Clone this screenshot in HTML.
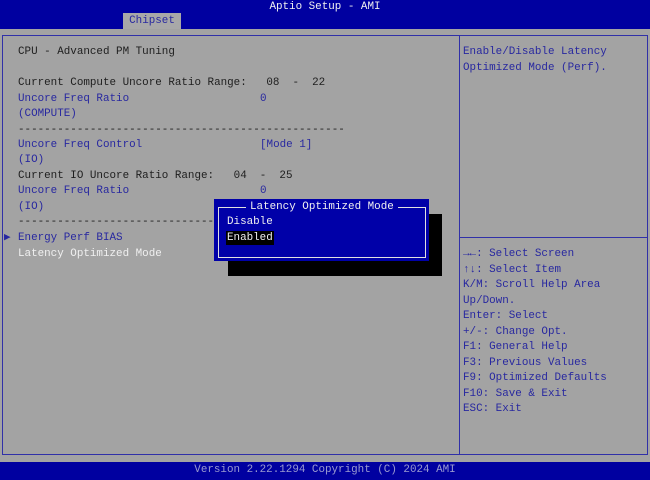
<!DOCTYPE html><html><head><style>
body{margin:0;width:650px;height:480px;overflow:hidden;background:#a3a3a3;position:relative;font-family:"Liberation Mono","DejaVu Sans Mono",monospace;font-size:10.9px;}
div{position:absolute;white-space:pre;}
.t{line-height:14px;}
.d{color:#1e1e1e}.b{color:#2828a0}.w{color:#f0f0f0}
</style></head><body>
<div style="left:0;top:0;width:650px;height:29px;background:#0000a0"></div>
<div class="t w" style="left:0;width:650px;top:0;text-align:center">Aptio Setup - AMI</div>
<div class="t" style="left:123px;top:13px;width:58px;height:16px;background:#a8a8a8;color:#2828a0;text-align:center;line-height:17px">Chipset</div>
<div style="left:2px;top:35px;width:644px;height:418px;border:1px solid #3030a8"></div>
<div style="left:459px;top:35px;width:1px;height:419px;background:#3030a8"></div>
<div style="left:460px;top:237px;width:187px;height:1px;background:#3030a8"></div>
<div style="left:0;top:462px;width:650px;height:18px;background:#0000a0"></div>
<div class="t" style="left:0;width:650px;top:463px;text-align:center;color:#9a9ad0">Version 2.22.1294 Copyright (C) 2024 AMI</div>

<div class="t d" style="left:18px;top:45px">CPU - Advanced PM Tuning</div>
<div class="t d" style="left:18px;top:76px">Current Compute Uncore Ratio Range:   08  -  22</div>
<div class="t b" style="left:18px;top:92px">Uncore Freq Ratio</div>
<div class="t b" style="left:260px;top:92px">0</div>
<div class="t b" style="left:18px;top:107px">(COMPUTE)</div>
<div class="t d" style="left:18px;top:123px">--------------------------------------------------</div>
<div class="t b" style="left:18px;top:138px">Uncore Freq Control</div>
<div class="t b" style="left:260px;top:138px">[Mode 1]</div>
<div class="t b" style="left:18px;top:153px">(IO)</div>
<div class="t d" style="left:18px;top:169px">Current IO Uncore Ratio Range:   04  -  25</div>
<div class="t b" style="left:18px;top:184px">Uncore Freq Ratio</div>
<div class="t b" style="left:260px;top:184px">0</div>
<div class="t b" style="left:18px;top:200px">(IO)</div>
<div class="t d" style="left:18px;top:215px">--------------------------------------------------</div>
<div class="t b" style="left:4px;top:231px">▶</div>
<div class="t b" style="left:18px;top:231px">Energy Perf BIAS</div>
<div class="t w" style="left:18px;top:247px">Latency Optimized Mode</div>

<div class="t b" style="left:463px;top:45px;line-height:15.5px">Enable/Disable Latency
Optimized Mode (Perf).</div>
<div class="t b" style="left:463px;top:247px;line-height:15.5px">→←: Select Screen
↑↓: Select Item
K/M: Scroll Help Area
Up/Down.
Enter: Select
+/-: Change Opt.
F1: General Help
F3: Previous Values
F9: Optimized Defaults
F10: Save &amp; Exit
ESC: Exit</div>

<div style="left:228px;top:214px;width:214px;height:62px;background:#000"></div>
<div style="left:214px;top:199px;width:215px;height:62px;background:#0000a8"></div>
<div style="left:218px;top:207px;width:206px;height:49px;border:1px solid #e0e0e0"></div>
<div class="t w" style="left:246px;top:200px;background:#0000a8;padding:0 4px">Latency Optimized Mode</div>
<div class="t w" style="left:227px;top:215px">Disable</div>
<div class="t w" style="left:226px;top:231px;background:#000;padding:0 1px">Enabled</div>
</body></html>
